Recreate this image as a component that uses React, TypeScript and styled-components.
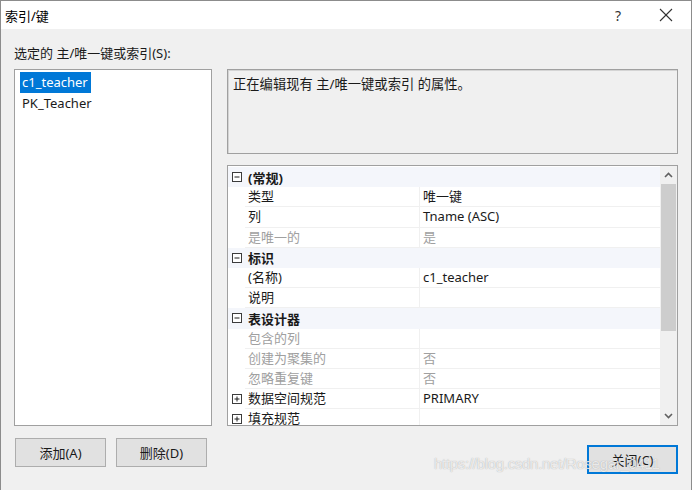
import React from 'react';
import styled, { createGlobalStyle } from 'styled-components';

const GlobalStyle = createGlobalStyle`
  html, body {
    margin: 0;
    padding: 0;
    background: #f0f0f0;
  }
  * {
    box-sizing: border-box;
  }
`;

const FONT = `"Segoe UI", "Noto Sans", "Noto Sans CJK SC", sans-serif`;

type Row =
  | { kind: 'cat'; label: string; open: boolean }
  | { kind: 'item'; label: string; value?: string; dim?: boolean; expand?: boolean };

const rows: Row[] = [
  { kind: 'cat', label: '(常规)', open: true },
  { kind: 'item', label: '类型', value: '唯一键' },
  { kind: 'item', label: '列', value: 'Tname (ASC)' },
  { kind: 'item', label: '是唯一的', value: '是', dim: true },
  { kind: 'cat', label: '标识', open: true },
  { kind: 'item', label: '(名称)', value: 'c1_teacher' },
  { kind: 'item', label: '说明', value: '' },
  { kind: 'cat', label: '表设计器', open: true },
  { kind: 'item', label: '包含的列', value: '', dim: true },
  { kind: 'item', label: '创建为聚集的', value: '否', dim: true },
  { kind: 'item', label: '忽略重复键', value: '否', dim: true },
  { kind: 'item', label: '数据空间规范', value: 'PRIMARY', expand: true },
  { kind: 'item', label: '填充规范', value: '', expand: true },
];

const ToggleBox = ({ open }: { open: boolean }) => (
  <svg width="10" height="10" viewBox="0 0 10 10">
    <rect x="0.5" y="0.5" width="9" height="9" fill="#fff" stroke="#3c3c3c" />
    <line x1="2.5" y1="5" x2="7.5" y2="5" stroke="#1e1e1e" />
    {!open && <line x1="5" y1="2.5" x2="5" y2="7.5" stroke="#1e1e1e" />}
  </svg>
);

const Chevron = ({ up }: { up: boolean }) => (
  <svg width="9" height="6" viewBox="0 0 9 6">
    <polyline
      points={up ? '1,5 4.5,1.5 8,5' : '1,1 4.5,4.5 8,1'}
      fill="none"
      stroke="#606060"
      strokeWidth="1.6"
    />
  </svg>
);

const App = () => {
  return (
    <>
      <GlobalStyle />
      <Window>
        <TitleBar>
          <Title>索引/键</Title>
          <HelpButton>?</HelpButton>
          <CloseX>
            <svg width="14" height="14" viewBox="0 0 14 14">
              <line x1="1" y1="1" x2="13" y2="13" stroke="#333" strokeWidth="1.1" />
              <line x1="13" y1="1" x2="1" y2="13" stroke="#333" strokeWidth="1.1" />
            </svg>
          </CloseX>
        </TitleBar>
        <Body>
          <Label>选定的 主/唯一键或索引(S):</Label>
          <MainRow>
            <ListBox>
              <ListItem $selected>c1_teacher</ListItem>
              <ListItem>PK_Teacher</ListItem>
            </ListBox>
            <RightColumn>
              <Description>正在编辑现有 主/唯一键或索引 的属性。</Description>
              <PropertyGrid>
                <GridRows>
                  {rows.map((r, i) =>
                    r.kind === 'cat' ? (
                      <CategoryRow key={i}>
                        <Gutter>
                          <ToggleBox open={r.open} />
                        </Gutter>
                        <CategoryName>{r.label}</CategoryName>
                      </CategoryRow>
                    ) : (
                      <ItemRow key={i}>
                        <Gutter>{r.expand && <ToggleBox open={false} />}</Gutter>
                        <NameCell $dim={r.dim}>{r.label}</NameCell>
                        <ValueCell $dim={r.dim}>{r.value}</ValueCell>
                      </ItemRow>
                    )
                  )}
                </GridRows>
                <ScrollBar>
                  <ScrollArrow>
                    <Chevron up />
                  </ScrollArrow>
                  <ScrollTrack>
                    <Thumb />
                  </ScrollTrack>
                  <ScrollArrow>
                    <Chevron up={false} />
                  </ScrollArrow>
                </ScrollBar>
              </PropertyGrid>
            </RightColumn>
          </MainRow>
          <Footer>
            <ButtonGroup>
              <Button>添加(A)</Button>
              <Button>删除(D)</Button>
            </ButtonGroup>
            <Button $default>关闭(C)</Button>
          </Footer>
          <Watermark>https://blog.csdn.net/Rosegar_0411</Watermark>
        </Body>
      </Window>
    </>
  );
};

export default App;

const Window = styled.div`
  width: 692px;
  height: 490px;
  border: 1px solid #8c8c8c;
  border-bottom: none;
  background: #f0f0f0;
  display: flex;
  flex-direction: column;
  font-family: ${FONT};
  font-size: 13px;
  color: #1a1a1a;
  overflow: hidden;
`;

const TitleBar = styled.div`
  height: 28px;
  background: #fff;
  display: flex;
  align-items: center;
  padding-left: 4px;
  flex-shrink: 0;
`;

const Title = styled.div`
  flex: 1;
  font-size: 13px;
  color: #000;
`;

const HelpButton = styled.div`
  width: 30px;
  text-align: center;
  font-size: 14px;
  color: #333;
  margin-right: 18px;
`;

const CloseX = styled.div`
  width: 30px;
  display: flex;
  justify-content: center;
  margin-right: 10px;
`;

const Body = styled.div`
  position: relative;
  flex: 1;
  padding: 16px 13px 0 13px;
  display: flex;
  flex-direction: column;
`;

const Label = styled.div`
  height: 17px;
  line-height: 17px;
  margin-bottom: 7px;
`;

const MainRow = styled.div`
  display: flex;
  gap: 15px;
  height: 357px;
`;

const ListBox = styled.div`
  width: 198px;
  background: #fff;
  border: 1px solid #a0a0a0;
  padding: 2px 5px;
  display: flex;
  flex-direction: column;
  align-items: flex-start;
`;

const ListItem = styled.div<{ $selected?: boolean }>`
  height: 21px;
  line-height: 21px;
  padding: 0 3px 0 2px;
  background: ${(p) => (p.$selected ? '#0078d7' : 'transparent')};
  color: ${(p) => (p.$selected ? '#fff' : '#1a1a1a')};
`;

const RightColumn = styled.div`
  width: 451px;
  display: flex;
  flex-direction: column;
  gap: 11px;
`;

const Description = styled.div`
  height: 85px;
  border: 1px solid #a0a0a0;
  box-shadow: inset 1px 1px 0 #d4d4d4;
  padding: 5px 5px;
  line-height: 18px;
  font-size: 13.3px;
`;

const PropertyGrid = styled.div`
  height: 261px;
  border: 1px solid #a0a0a0;
  background: #fff;
  display: flex;
  overflow: hidden;
`;

const GridRows = styled.div`
  flex: 1;
  display: flex;
  flex-direction: column;
  padding-top: 1px;
`;

const CategoryRow = styled.div`
  height: 20.2px;
  flex-shrink: 0;
  display: flex;
  align-items: center;
  background: #f4f6fb;
`;

const ItemRow = styled.div`
  height: 20.2px;
  flex-shrink: 0;
  display: grid;
  grid-template-columns: 17px 175px 1fr;
  align-items: stretch;
`;

const Gutter = styled.div`
  width: 17px;
  height: 20px;
  display: flex;
  align-items: center;
  justify-content: center;
  padding-left: 1px;
`;

const CategoryName = styled.div`
  font-weight: bold;
  padding-left: 3px;
`;

const NameCell = styled.div<{ $dim?: boolean }>`
  padding-left: 3px;
  line-height: 19px;
  border-bottom: 1px solid #f0f0f0;
  border-right: 1px solid #f0f0f0;
  color: ${(p) => (p.$dim ? '#a0a0a0' : '#1a1a1a')};
  white-space: nowrap;
`;

const ValueCell = styled.div<{ $dim?: boolean }>`
  padding-left: 3px;
  line-height: 19px;
  border-bottom: 1px solid #f0f0f0;
  color: ${(p) => (p.$dim ? '#a0a0a0' : '#1a1a1a')};
  white-space: nowrap;
`;

const ScrollBar = styled.div`
  width: 17px;
  background: #f0f0f0;
  display: flex;
  flex-direction: column;
`;

const ScrollArrow = styled.div`
  height: 18px;
  display: flex;
  align-items: center;
  justify-content: center;
`;

const ScrollTrack = styled.div`
  flex: 1;
  display: flex;
  flex-direction: column;
`;

const Thumb = styled.div`
  height: 147px;
  margin: 0 1px;
  background: #cdcdcd;
`;

const Footer = styled.div`
  margin-top: 12px;
  display: flex;
  justify-content: space-between;
  align-items: flex-start;
`;

const ButtonGroup = styled.div`
  display: flex;
  gap: 10px;
  padding-left: 1px;
`;

const Button = styled.div<{ $default?: boolean }>`
  width: 91px;
  height: 29px;
  display: flex;
  align-items: center;
  justify-content: center;
  background: #e1e1e1;
  border: ${(p) => (p.$default ? '2px solid #0078d7' : '1px solid #adadad')};
  margin-top: ${(p) => (p.$default ? '7px' : '0')};
  color: #1a1a1a;
`;

const Watermark = styled.div`
  position: absolute;
  left: 433px;
  top: 426px;
  font-family: "Liberation Sans", sans-serif;
  font-size: 15px;
  letter-spacing: -0.3px;
  color: rgba(255, 255, 255, 0.75);
  text-shadow: 0 0 1px rgba(140, 140, 140, 0.8);
  white-space: nowrap;
  pointer-events: none;
`;
